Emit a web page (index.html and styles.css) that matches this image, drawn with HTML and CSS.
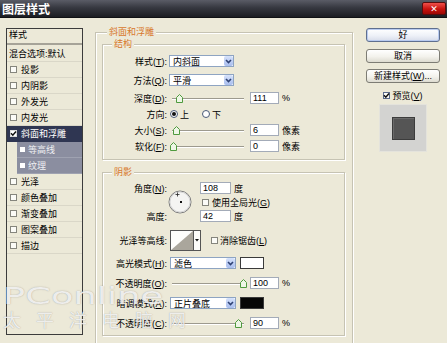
FILE: index.html
```html
<!DOCTYPE html>
<html>
<head>
    <meta charset="utf-8">
    <title>图层样式</title>
    <link rel="stylesheet" href="styles.css">
</head>
<body>
    <div class="titlebar">
        <span class="title">图层样式</span>
        <span class="close-btn">✕</span>
    </div>

    <div class="dialog">
        <!-- left: list of effects -->
        <div class="style-list">
            <div class="list-head">样式</div>
            <div class="list-item blend">混合选项:默认</div>
            <div class="list-item"><span class="box"></span>投影</div>
            <div class="list-item"><span class="box"></span>内阴影</div>
            <div class="list-item"><span class="box"></span>外发光</div>
            <div class="list-item"><span class="box"></span>内发光</div>
            <div class="list-item selected"><span class="box"><svg width="7" height="7" viewBox="0 0 7 7"><path d="M1 3.3 L2.8 5.2 L6 1.4" stroke="#111" stroke-width="1.5" fill="none"/></svg></span>斜面和浮雕</div>
            <div class="list-item sub"><span class="sub-box"></span>等高线</div>
            <div class="list-item sub"><span class="sub-box"></span>纹理</div>
            <div class="list-item"><span class="box"></span>光泽</div>
            <div class="list-item"><span class="box"></span>颜色叠加</div>
            <div class="list-item"><span class="box"></span>渐变叠加</div>
            <div class="list-item"><span class="box"></span>图案叠加</div>
            <div class="list-item"><span class="box"></span>描边</div>
        </div>

        <!-- middle: bevel and emboss settings -->
        <div class="group outer">
            <div class="group-title">斜面和浮雕</div>

            <div class="group inner structure">
                <div class="group-title inner-title">结构</div>

                <div class="row mt4">
                    <span class="lbl">样式(<u>T</u>):</span>
                    <div class="select"><span class="select-text">内斜面</span><span class="drop"><svg width="7" height="5" viewBox="0 0 7 5"><path d="M1 1 L3.5 3.5 L6 1" stroke="#2f4274" stroke-width="1.6" fill="none"/></svg></span></div>
                </div>
                <div class="row mt5">
                    <span class="lbl">方法(<u>Q</u>):</span>
                    <div class="select"><span class="select-text">平滑</span><span class="drop"><svg width="7" height="5" viewBox="0 0 7 5"><path d="M1 1 L3.5 3.5 L6 1" stroke="#2f4274" stroke-width="1.6" fill="none"/></svg></span></div>
                </div>
                <div class="row mt4">
                    <span class="lbl">深度(<u>D</u>):</span>
                    <div class="slider"><svg class="thumb" style="left:6px" width="7" height="9" viewBox="0 0 7 9"><path d="M0.5 3.5 L3.5 0.5 L6.5 3.5 L6.5 8.5 L0.5 8.5 Z" fill="#eef6e6" stroke="#4f9a3e"/></svg></div>
                    <span class="num">111</span><span class="unit">%</span>
                </div>
                <div class="row mt2">
                    <span class="lbl">方向:</span>
                    <span class="radio on"></span><span class="radio-text">上</span>
                    <span class="radio second"></span><span class="radio-text">下</span>
                </div>
                <div class="row mt2">
                    <span class="lbl">大小(<u>S</u>):</span>
                    <div class="slider"><svg class="thumb" style="left:3px" width="7" height="9" viewBox="0 0 7 9"><path d="M0.5 3.5 L3.5 0.5 L6.5 3.5 L6.5 8.5 L0.5 8.5 Z" fill="#eef6e6" stroke="#4f9a3e"/></svg></div>
                    <span class="num">6</span><span class="unit">像素</span>
                </div>
                <div class="row mt2">
                    <span class="lbl">软化(<u>F</u>):</span>
                    <div class="slider"><svg class="thumb" style="left:0px" width="7" height="9" viewBox="0 0 7 9"><path d="M0.5 3.5 L3.5 0.5 L6.5 3.5 L6.5 8.5 L0.5 8.5 Z" fill="#eef6e6" stroke="#4f9a3e"/></svg></div>
                    <span class="num">0</span><span class="unit">像素</span>
                </div>
            </div>

            <div class="group inner shading">
                <div class="group-title inner-title">阴影</div>

                <div class="angle-block">
                    <span class="lbl">角度(<u>N</u>):</span>
                    <svg class="dial" width="24" height="24" viewBox="0 0 24 24">
                        <circle cx="12" cy="12" r="11" fill="#f4f4f2" stroke="#7c7c7c"/>
                        <circle cx="12" cy="12" r="10" fill="none" stroke="#d6d6d6"/>
                        <path d="M9.5 2.5 V6.5 M7.5 4.5 H11.5" stroke="#222" stroke-width="0.8"/>
                        <rect x="12" y="11" width="2" height="2" fill="#111"/>
                    </svg>
                    <div class="field"><span class="num wide">108</span><span class="unit">度</span></div>
                    <div class="field"><span class="box check-gl"></span><span class="check-text">使用全局光(<u>G</u>)</span></div>
                    <span class="lbl">高度:</span>
                    <div class="field"><span class="num wide">42</span><span class="unit">度</span></div>
                </div>

                <div class="row tall mt8">
                    <span class="lbl">光泽等高线:</span>
                    <svg class="contour" width="31" height="21" viewBox="0 0 31 21">
                        <rect x="0.5" y="0.5" width="30" height="20" fill="#fdfdfb" stroke="#555"/>
                        <path d="M1 20 L23 1 L23 20 Z" fill="#aaa69c"/>
                        <path d="M23.5 1 V20" stroke="#555"/>
                        <path d="M25 9 L29 9 L27 11.5 Z" fill="#111"/>
                    </svg>
                    <span class="box aa"></span><span class="check-text">消除锯齿(<u>L</u>)</span>
                </div>
                <div class="row mt6">
                    <span class="lbl">高光模式(<u>H</u>):</span>
                    <div class="select wide"><span class="select-text">滤色</span><span class="drop"><svg width="7" height="5" viewBox="0 0 7 5"><path d="M1 1 L3.5 3.5 L6 1" stroke="#2f4274" stroke-width="1.6" fill="none"/></svg></span></div>
                    <span class="swatch white"></span>
                </div>
                <div class="row mt6">
                    <span class="lbl">不透明度(<u>O</u>):</span>
                    <div class="slider"><svg class="thumb" style="left:70px" width="7" height="9" viewBox="0 0 7 9"><path d="M0.5 3.5 L3.5 0.5 L6.5 3.5 L6.5 8.5 L0.5 8.5 Z" fill="#eef6e6" stroke="#4f9a3e"/></svg></div>
                    <span class="num">100</span><span class="unit">%</span>
                </div>
                <div class="row mt6">
                    <span class="lbl">暗调模式(<u>A</u>):</span>
                    <div class="select wide"><span class="select-text">正片叠底</span><span class="drop"><svg width="7" height="5" viewBox="0 0 7 5"><path d="M1 1 L3.5 3.5 L6 1" stroke="#2f4274" stroke-width="1.6" fill="none"/></svg></span></div>
                    <span class="swatch black"></span>
                </div>
                <div class="row mt6">
                    <span class="lbl">不透明度(<u>C</u>):</span>
                    <div class="slider"><svg class="thumb" style="left:65px" width="7" height="9" viewBox="0 0 7 9"><path d="M0.5 3.5 L3.5 0.5 L6.5 3.5 L6.5 8.5 L0.5 8.5 Z" fill="#eef6e6" stroke="#4f9a3e"/></svg></div>
                    <span class="num">90</span><span class="unit">%</span>
                </div>
            </div>
        </div>

        <!-- right: buttons and preview -->
        <div class="side">
            <div class="btn default">好</div>
            <div class="btn mt7">取消</div>
            <div class="btn mt6">新建样式(<u>W</u>)...</div>
            <div class="preview-check">
                <span class="box"><svg width="7" height="7" viewBox="0 0 7 7"><path d="M1 3.3 L2.8 5.2 L6 1.4" stroke="#111" stroke-width="1.5" fill="none"/></svg></span>
                <span>预览(<u>V</u>)</span>
            </div>
            <div class="preview"><div class="preview-square"></div></div>
        </div>
    </div>

    <div class="watermark">
        <div class="wm-en">PConline</div>
        <div class="wm-cn">太平洋电脑网</div>
    </div>
</body>
</html>
```

FILE: styles.css
```css
* {
    box-sizing: border-box;
}

body {
    margin: 0;
    width: 447px;
    height: 343px;
    overflow: hidden;
    position: relative;
    background-color: #ece9d8;
    font-family: "Liberation Sans", "Noto Sans CJK SC", sans-serif;
    font-size: 9px;
    color: #000;
}

u {
    text-decoration: underline;
    text-underline-offset: 1px;
}

/* title bar */
.titlebar {
    height: 18px;
    display: flex;
    align-items: center;
    justify-content: space-between;
    padding: 0 1px 0 2px;
    background: linear-gradient(#5a5c66, #363840 45%, #1c1d22);
    border-bottom: 1px solid #101114;
}

.title {
    color: #fff;
    font-family: "Noto Sans CJK SC", sans-serif;
    font-weight: bold;
    font-size: 12px;
    line-height: 14px;
}

.close-btn {
    width: 24px;
    height: 13px;
    display: flex;
    align-items: center;
    justify-content: center;
    color: #fff;
    font-family: "DejaVu Sans", sans-serif;
    font-size: 9px;
    font-weight: bold;
    border-radius: 2px;
    background: linear-gradient(#f0504a, #c8120e 55%, #9c0805);
    border: 1px solid #5a0c0c;
}

.dialog {
    display: flex;
    align-items: flex-start;
    padding: 10px 0 0 6px;
}

/* effect list */
.style-list {
    width: 77px;
    height: 307px;
    border: 1px solid #3c3c3c;
    flex: none;
}

.list-head {
    height: 16px;
    line-height: 13px;
    padding-left: 2px;
    border-bottom: 2px solid #a6a398;
}

.list-item {
    height: 16px;
    display: flex;
    align-items: center;
    padding-left: 3px;
    border-bottom: 1px solid #dad7c8;
}

.list-item.blend {
    height: 17px;
    padding-left: 2px;
}

.box {
    width: 7px;
    height: 7px;
    flex: none;
    margin-right: 4px;
    border: 1px solid #85857d;
    background-color: #fbfbf7;
    display: flex;
    align-items: center;
    justify-content: center;
}

.box svg {
    display: block;
    margin: -1px;
}

.list-item.selected {
    background-color: #2f3652;
    color: #fff;
    border-bottom-color: #2f3652;
}

.list-item.selected .box {
    border-color: #ddd;
    background-color: #fff;
}

.list-item.sub {
    margin-left: 10px;
    background-color: #8b8ea0;
    color: #eeeef2;
    border-bottom-color: #9fa2b1;
}

.sub-box {
    width: 5px;
    height: 5px;
    margin-right: 3px;
    background-color: #fff;
}

/* group boxes */
.group {
    border: 1px solid #c6c3b3;
    box-shadow: inset 1px 1px 0 #fff, 1px 1px 0 #fff;
}

.outer {
    width: 258px;
    margin: 4px 0 0 12px;
    padding: 0 7px 7px 6px;
    flex: none;
}

.group-title {
    width: fit-content;
    height: 12px;
    line-height: 12px;
    margin: -7px 0 0 5px;
    padding: 0 2px;
    background-color: #ece9d8;
    color: #d8782c;
}

.inner {
    margin-top: 6px;
}

.inner-title {
    margin-left: 9px;
}

.structure {
    padding-bottom: 6px;
}

.shading {
    margin-top: 12px;
    padding-bottom: 5px;
}

.row {
    display: flex;
    align-items: center;
    height: 14px;
}

.row.tall {
    height: 20px;
}

.mt2 { margin-top: 2px; }
.mt4 { margin-top: 4px; }
.mt5 { margin-top: 5px; }
.mt6 { margin-top: 6px; }
.mt7 { margin-top: 7px; }
.mt8 { margin-top: 8px; }

.lbl {
    width: 64px;
    flex: none;
    margin-right: 2px;
    text-align: right;
    white-space: nowrap;
}

.select {
    width: 65px;
    height: 12px;
    display: flex;
    align-items: center;
    justify-content: space-between;
    border: 1px solid #8ea4c2;
    background-color: #fff;
    padding-left: 3px;
}

.select.wide {
    width: 66px;
    margin-left: 1px;
}

.drop {
    width: 9px;
    height: 10px;
    display: flex;
    align-items: center;
    justify-content: center;
    border-radius: 2px;
    background: linear-gradient(#d6e2fb, #a8bdee);
}

.drop svg {
    display: block;
}

.slider {
    position: relative;
    width: 75px;
    height: 12px;
    margin-left: 1px;
    flex: none;
}

.slider::before {
    content: "";
    position: absolute;
    left: 2px;
    right: 1px;
    top: 6px;
    height: 1px;
    background-color: #9d9a8e;
    box-shadow: 0 1px 0 #fff;
}

.thumb {
    position: absolute;
    top: 2px;
    display: block;
}

.num {
    width: 29px;
    height: 12px;
    margin-left: 5px;
    padding-left: 2px;
    line-height: 10px;
    border: 1px solid #a3abb8;
    background-color: #fff;
    flex: none;
}

.num.wide {
    width: 31px;
    margin-left: 0;
}

.unit {
    margin-left: 3px;
}

.radio {
    width: 8px;
    height: 8px;
    border-radius: 50%;
    border: 1px solid #4a5a78;
    background-color: #fff;
    display: flex;
    align-items: center;
    justify-content: center;
    flex: none;
    margin-left: 1px;
}

.radio.second {
    margin-left: 13px;
}

.radio.on::after {
    content: "";
    width: 4px;
    height: 4px;
    border-radius: 50%;
    background-color: #111;
}

.radio-text {
    margin-left: 2px;
}

/* angle and altitude */
.angle-block {
    display: grid;
    grid-template-columns: 64px 33px auto;
    grid-template-rows: 12px 12px 12px;
    row-gap: 2px;
    align-items: center;
    margin-top: 4px;
}

.dial {
    grid-column: 2;
    grid-row: 1 / 4;
    margin-left: 1px;
    display: block;
}

.field {
    grid-column: 3;
    display: flex;
    align-items: center;
    height: 12px;
}

.check-gl {
    margin-left: 2px;
    margin-right: 3px;
}

.contour {
    display: block;
    margin-left: 1px;
}

.box.aa {
    margin-left: 10px;
    margin-right: 2px;
}

.swatch {
    width: 24px;
    height: 12px;
    margin-left: 4px;
    border: 1px solid #3a3a3a;
}

.swatch.white {
    background-color: #fff;
}

.swatch.black {
    background-color: #070707;
}

/* right column */
.side {
    width: 74px;
    margin-left: 13px;
    flex: none;
    display: flex;
    flex-direction: column;
    align-items: center;
}

.btn {
    width: 74px;
    height: 14px;
    line-height: 12px;
    text-align: center;
    border: 1px solid #7d7c74;
    border-radius: 3px;
    background: linear-gradient(#ffffff, #f3f2ec 55%, #dddbd0);
}

.btn.default {
    border-color: #5f6f8f;
    box-shadow: inset 0 0 0 1px #b9cbf0;
    background: linear-gradient(#ffffff, #eef1f8 55%, #d7dcea);
}

.preview-check {
    height: 12px;
    margin-top: 6px;
    display: flex;
    align-items: center;
}

.preview-check .box {
    margin-right: 2px;
    border-color: #5b6c8c;
}

.preview {
    width: 48px;
    height: 48px;
    margin-top: 3px;
    display: flex;
    align-items: center;
    justify-content: center;
    background-color: #d3d3d1;
    border: 1px solid #e4e3dc;
}

.preview-square {
    width: 23px;
    height: 23px;
    background-color: #555;
    border: 1px solid #3c3c3c;
    box-shadow: inset 1px 1px 0 #6a6a6a;
}

/* watermark over the picture */
.watermark {
    position: absolute;
    left: 3px;
    top: 283px;
    color: rgba(255, 255, 255, 0.82);
    pointer-events: none;
    text-shadow: 0 0 1px rgba(100, 100, 100, 0.6);
}

.wm-en {
    font-family: "DejaVu Sans", sans-serif;
    font-size: 23px;
    line-height: 27px;
    transform: scaleX(1.6);
    transform-origin: left;
}

.wm-cn {
    font-family: "Noto Sans CJK SC", sans-serif;
    font-size: 18px;
    line-height: 18px;
    letter-spacing: 15px;
}
```
